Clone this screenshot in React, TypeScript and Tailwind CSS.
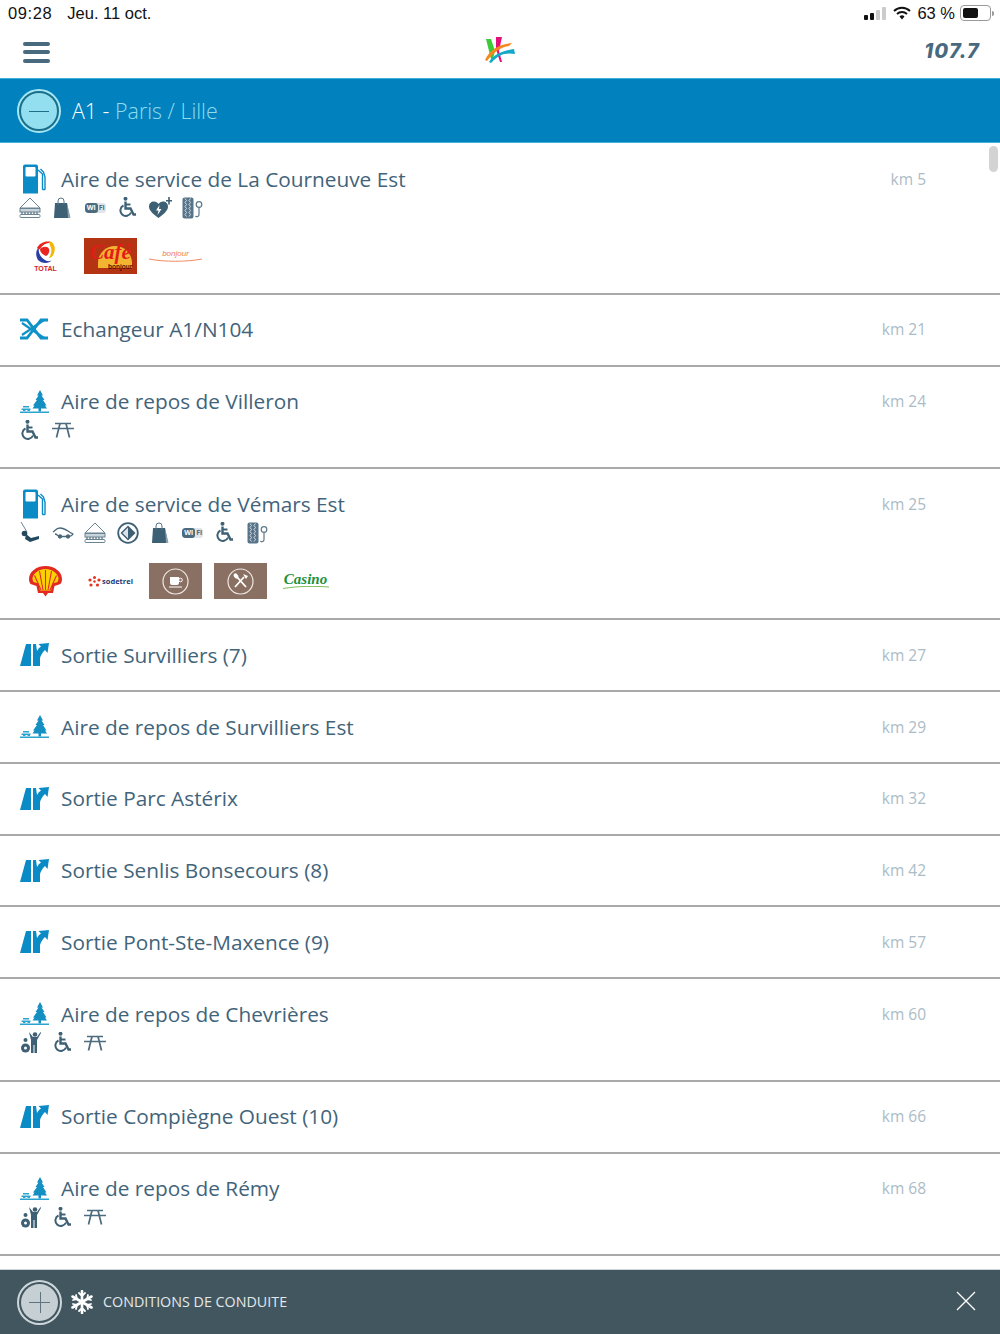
import React from "react";

const BLUE = "#0b8bc6";

function Fuel() {
  return (
    <svg width="24" height="30" viewBox="0 0 24 30">
      <path d="M3 0.500h11a2 2 0 0 1 2 2V29.500H1V2.500a2 2 0 0 1 2-2z" fill={BLUE} />
      <rect x="3.500" y="3" width="10" height="9.500" rx="1" fill="#fff" />
      <path d="M16 6l4.500 4v15a1.500 1.500 0 0 0 2.500 0V13l-1.500-5-3-3" fill="none" stroke={BLUE} strokeWidth="1.400" />
    </svg>
  );
}
function Interchange() {
  return (
    <svg width="30" height="22" viewBox="0 0 30 22">
      <g fill="none" stroke="#0f92c8" strokeWidth="2.800">
        <path d="M1 2h7l14 18h7" />
        <path d="M1 20h7L22 2h7" />
        <path d="M3 5l22 15M3 17 25 2" strokeWidth="2.200" />
      </g>
    </svg>
  );
}
function Rest() {
  return (
    <svg width="29" height="23" viewBox="0 0 29 23">
      <path d="M20 0l3 5.500h-1.500L24.500 10H23l3.500 5.500h-1.500l2 3h-6v3h-2.500v-3h-6l2-3h-1.500L17 10h-1.500l3-4.500H17z" fill="#138fc2" />
      <path d="M0 23h29v-1.500H0zM1.500 18.500h9v1.500h-9zM3 20h2.500v2H3zM7.500 20H10v2H7.500zM3 16h6v1.500H3z" fill="#2aa3cf" />
    </svg>
  );
}
function ExitIcon() {
  return (
    <svg width="29" height="23" viewBox="0 0 29 23">
      <path d="M6 1h5v22H0z" fill={BLUE} />
      <path d="M13 1h3l1 7c1-2 2-3 4-4.500L18.500 1 29 0l-1.500 10-2.500-3c-2 2-4 4.500-5 8v8h-7z" fill={BLUE} />
    </svg>
  );
}
function Sandwich() {
  return (
    <svg width="22" height="21" viewBox="0 0 22 21" fill="none" stroke="#6b8494" strokeWidth="1">
      <path d="M1 11 11 1l10 10z" />
      <rect x="1" y="11.500" width="20" height="3.500" fill="#c9d3da" />
      <path d="M2 16h18" strokeDasharray="2 1" strokeWidth="1.500" />
      <rect x="1" y="17.500" width="20" height="3" rx="1" />
    </svg>
  );
}
function Bag() {
  return (
    <svg width="17" height="21" viewBox="0 0 17 21">
      <path d="M1 6h12l3 15H0z" fill="#3e6075" />
      <path d="M13 6l3.500 15H14z" fill="#8aa0ae" />
      <path d="M4 8V4a3 3 0 0 1 6 0v4" fill="none" stroke="#557386" strokeWidth="1" />
    </svg>
  );
}
function Wifi() {
  return (
    <div className="w-[21px] h-[10px] rounded-[3px] bg-[#dfe5e9] flex overflow-hidden">
      <span className="w-[13px] h-full bg-[#4d6b7e] rounded-[3px] text-white text-[7px] leading-[10px] font-bold text-center">Wi</span>
      <span className="flex-1 text-[#4d6b7e] text-[7px] leading-[10px] font-bold text-center">Fi</span>
    </div>
  );
}
function Wheelchair() {
  return (
    <svg width="18" height="21" viewBox="0 0 18 21" fill="none" stroke="#3e6075" strokeWidth="2">
      <circle cx="6.500" cy="1.800" r="2" fill="#3e6075" stroke="none" />
      <path d="M6.500 4.500v7h5l3 6h2.500" strokeWidth="2.400" />
      <path d="M6.500 7.500h5" />
      <path d="M4.500 8.500a5.500 5.500 0 1 0 7.500 7" />
    </svg>
  );
}
function Heart() {
  return (
    <svg width="23" height="22" viewBox="0 0 23 22">
      <path d="M9.500 21C4 17 0 13.500 0 9.500 0 6.500 2.200 4.500 5 4.500c2 0 3.500 1 4.500 2.500 1-1.500 2.500-2.500 4.500-2.500 2.800 0 5 2 5 5 0 4-4 7.500-9.500 11.500z" fill="#3e6075" />
      <path d="M10.500 8 7 13.500h2.500L8.500 18l4-6H10z" fill="#fff" />
      <path d="M17 3h2.200V0h1.600v3H23v1.600h-2.200v3h-1.600v-3H17z" fill="#3e6075" />
    </svg>
  );
}
function Tire() {
  return (
    <svg width="21" height="22" viewBox="0 0 21 22" fill="none">
      <rect x="0.500" y="0.500" width="11" height="21" rx="2" fill="#577488" />
      <path d="M3 1.500l1.500 2-1.500 2 1.500 2-1.500 2 1.500 2-1.500 2 1.500 2-1.500 2 1.500 2M8.500 1.500l-1.500 2 1.500 2-1.500 2 1.500 2-1.500 2 1.500 2-1.500 2 1.500 2-1.500 2" stroke="#d3dce2" strokeWidth="1" />
      <circle cx="17" cy="7.500" r="2.800" stroke="#5d7889" strokeWidth="1.200" />
      <path d="M17 10.500v7a2 2 0 0 1-3.500 1.500" stroke="#5d7889" strokeWidth="1.200" />
    </svg>
  );
}
function Swing() {
  return (
    <svg width="21" height="21" viewBox="0 0 21 21">
      <path d="M1 0l6 10" stroke="#6b8494" strokeWidth="1" />
      <circle cx="4.500" cy="11.500" r="2.800" fill="#24495e" />
      <path d="M6 12l5 4 8-2v3l-9 3-5-3z" fill="#24495e" />
    </svg>
  );
}
function Car() {
  return (
    <svg width="22" height="12" viewBox="0 0 22 12" fill="none" stroke="#486779" strokeWidth="1.300">
      <path d="M1 5c2-1 3-4 7-4 5 0 7 3 13 6-1 2-2 2.500-4 2.500H8C6 9.500 5 7 3 7" />
      <circle cx="8" cy="9.500" r="1.500" fill="#486779" />
      <circle cx="16" cy="9.500" r="1.500" fill="#486779" />
    </svg>
  );
}
function Diamond() {
  return (
    <svg width="22" height="22" viewBox="0 0 22 22">
      <circle cx="11" cy="11" r="9.800" fill="none" stroke="#3e6075" strokeWidth="1.800" />
      <path d="M11 3.500 18.500 11 11 18.500 3.500 11z" fill="#3e6075" />
      <path d="M11 5.500v11L5.500 11z" fill="#dce4e9" />
    </svg>
  );
}
function Family() {
  return (
    <svg width="21" height="21" viewBox="0 0 21 21">
      <circle cx="15" cy="2.500" r="2.300" fill="#3e6075" />
      <path d="M9 0l4 5h4l3.500-5 .5 1-4 7v13h-2.500v-8h-1v8H11V8z" fill="#3e6075" />
      <circle cx="5.500" cy="8" r="2" fill="#3e6075" />
      <circle cx="5.500" cy="16" r="4.500" fill="#3e6075" />
      <circle cx="5.500" cy="16" r="1.500" fill="#fff" />
    </svg>
  );
}
function Picnic() {
  return (
    <svg width="22" height="16" viewBox="0 0 22 16" fill="none" stroke="#4d6b7e" strokeWidth="1.700">
      <path d="M3 1.500h16M0 6.500h22" />
      <path d="M8 1.500 4.500 15.500M14 1.500l3.500 14" />
    </svg>
  );
}

const amenityIcons: Record<string, React.ReactNode> = {
  sandwich: <Sandwich />,
  bag: <Bag />,
  wifi: <Wifi />,
  chair: <Wheelchair />,
  heart: <Heart />,
  tire: <Tire />,
  swing: <Swing />,
  car: <Car />,
  diamond: <Diamond />,
  family: <Family />,
  picnic: <Picnic />,
};

function TotalLogo() {
  return (
    <div className="w-[53px] h-[36px] flex flex-col items-center">
      <svg width="23" height="25" viewBox="0 0 23 25" className="mt-[2px]">
        <path d="M4 20C1 15 2 9 5 8c-1 4 1 9 6 12 3 2 6 1 7 0-3 4-10 4-14 0z" fill="#2a3fa5" />
        <path d="M3 8C6 2 14 0 18 3c-4-1-9 1-12 6-1 1-2 0-3-1z" fill="#e8261f" />
        <path d="M15 1c5 1 7 7 5 12-1 3-3 5-5 5 2-3 3-7 2-10-1-3-2-5-2-7z" fill="#f6b500" />
        <path d="M6 9c3-3 8-3 9 0 1 3-1 6-3 7-2-1-6-3-6-7z" fill="#e8261f" />
      </svg>
      <span className="text-[7px] leading-[7px] font-bold text-[#d8231f] font-['Liberation_Sans',sans-serif]">TOTAL</span>
    </div>
  );
}
function CafeLogo() {
  return (
    <div className="relative w-[53px] h-[36px] bg-[#b33312] overflow-hidden">
      <div className="absolute left-[14px] top-[8px] w-[34px] h-[22px] bg-[#f3b431] rounded-t-[17px]" />
      <span className="absolute left-[6px] top-[0px] text-[21px] leading-[28px] italic font-bold text-[#e31b1b] font-['Liberation_Serif',serif]">Café</span>
      <span className="absolute left-[24px] top-[25px] text-[6.500px] leading-[8px] font-bold text-[#3b1206] font-['Liberation_Sans',sans-serif]">bonjour</span>
    </div>
  );
}
function BonjourLogo() {
  return (
    <div className="relative w-[53px] h-[36px] flex flex-col items-center justify-center">
      <span className="text-[8px] leading-[8px] italic text-[#ee7c50] font-['Liberation_Sans',sans-serif]">bonjour</span>
      <svg width="53" height="4" viewBox="0 0 53 4">
        <path d="M0 1c15 3 38 3 53 0" fill="none" stroke="#f08a62" strokeWidth="1" />
      </svg>
    </div>
  );
}
function ShellLogo() {
  return (
    <div className="w-[53px] h-[36px] flex items-center justify-center">
      <svg width="33" height="31" viewBox="0 0 33 31">
        <path d="M16.500 0C7 0 0 6 0 13c0 2 .5 3.500 1.500 5l6 2 1.500 7h5l2.500 3.500L19 27h5l1.500-7 6-2c1-1.500 1.500-3 1.500-5C33 6 26 0 16.500 0z" fill="#e22a23" />
        <path d="M16.500 3C10 3 4.500 7 3.500 12c0 2 .5 3 1 4l5 1.500 1.500 7h11l1.500-7 5-1.500c.5-1 1-2 1-4C28.500 7 23 3 16.500 3z" fill="#fbd204" />
        <path d="M16.500 24V4M14 24 10.500 5M19 24 22.500 5M12 24 5.500 9.500M21 24 27.500 9.500" stroke="#e22a23" strokeWidth="1.100" />
      </svg>
    </div>
  );
}
function SodetrelLogo() {
  return (
    <div className="w-[53px] h-[36px] flex items-center justify-center gap-[1px]">
      <svg width="13" height="11" viewBox="0 0 13 11">
        <g fill="#e3341f">
          <circle cx="6.500" cy="1.500" r="1.500" />
          <circle cx="2" cy="4" r="1.600" />
          <circle cx="11" cy="4" r="1.600" />
          <circle cx="3" cy="9" r="1.600" />
          <circle cx="9.500" cy="9" r="1.600" />
          <circle cx="6.500" cy="5.500" r="1.200" />
        </g>
      </svg>
      <span className="text-[7.500px] leading-[10px] font-bold text-[#243a7a] font-['Open_Sans',sans-serif]">sodetrel</span>
    </div>
  );
}
function CoffeeLogo() {
  return (
    <div className="w-[53px] h-[36px] bg-[#8a7062] flex items-center justify-center">
      <svg width="27" height="27" viewBox="0 0 27 27" fill="none">
        <circle cx="13.500" cy="13.500" r="12.500" stroke="#efe9e5" strokeWidth="1.200" />
        <path d="M8 9h9v6a2 2 0 0 1-2 2h-5a2 2 0 0 1-2-2z" fill="#fff" />
        <circle cx="18.500" cy="12" r="1.800" stroke="#fff" strokeWidth="1" />
        <path d="M7 19h13" stroke="#fff" strokeWidth="1" />
      </svg>
    </div>
  );
}
function ForkLogo() {
  return (
    <div className="w-[53px] h-[36px] bg-[#8a7062] flex items-center justify-center">
      <svg width="27" height="27" viewBox="0 0 27 27" fill="none">
        <circle cx="13.500" cy="13.500" r="12.500" stroke="#efe9e5" strokeWidth="1.200" />
        <path d="M8 19 17 9M19 19 10 9" stroke="#fff" strokeWidth="1.800" />
        <path d="M16 6l3 5 2-3z" fill="#fff" />
        <ellipse cx="9" cy="8" rx="2" ry="2.800" fill="#fff" transform="rotate(-40 9 8)" />
      </svg>
    </div>
  );
}
function CasinoLogo() {
  return (
    <div className="w-[53px] h-[36px] flex flex-col items-center justify-center">
      <span className="text-[15px] leading-[13px] italic font-bold text-[#1f9138] font-['Liberation_Serif',serif]">Casino</span>
      <svg width="46" height="3" viewBox="0 0 46 3">
        <path d="M0 2.500C15 0 32 0 46 1" fill="none" stroke="#7cbf55" strokeWidth="1" />
      </svg>
    </div>
  );
}

type Entry = {
  type: "fuel" | "swap" | "rest" | "exit";
  title: string;
  km: string;
  amenities?: string[];
  logos?: React.ReactNode[];
};

const entries: Entry[] = [
  {
    type: "fuel",
    title: "Aire de service de La Courneuve Est",
    km: "km 5",
    amenities: ["sandwich", "bag", "wifi", "chair", "heart", "tire"],
    logos: [<TotalLogo />, <CafeLogo />, <BonjourLogo />],
  },
  { type: "swap", title: "Echangeur A1/N104", km: "km 21" },
  { type: "rest", title: "Aire de repos de Villeron", km: "km 24", amenities: ["chair", "picnic"] },
  {
    type: "fuel",
    title: "Aire de service de Vémars Est",
    km: "km 25",
    amenities: ["swing", "car", "sandwich", "diamond", "bag", "wifi", "chair", "tire"],
    logos: [<ShellLogo />, <SodetrelLogo />, <CoffeeLogo />, <ForkLogo />, <CasinoLogo />],
  },
  { type: "exit", title: "Sortie Survilliers (7)", km: "km 27" },
  { type: "rest", title: "Aire de repos de Survilliers Est", km: "km 29" },
  { type: "exit", title: "Sortie Parc Astérix", km: "km 32" },
  { type: "exit", title: "Sortie Senlis Bonsecours (8)", km: "km 42" },
  { type: "exit", title: "Sortie Pont-Ste-Maxence (9)", km: "km 57" },
  { type: "rest", title: "Aire de repos de Chevrières", km: "km 60", amenities: ["family", "chair", "picnic"] },
  { type: "exit", title: "Sortie Compiègne Ouest (10)", km: "km 66" },
  { type: "rest", title: "Aire de repos de Rémy", km: "km 68", amenities: ["family", "chair", "picnic"] },
];

const typeIcon = {
  fuel: <Fuel />,
  swap: <Interchange />,
  rest: <Rest />,
  exit: <ExitIcon />,
};

function Row({ e }: { e: Entry }) {
  const h = e.logos ? "h-[150.9px]" : e.amenities ? "h-[102.7px]" : "h-[71.8px]";
  return (
    <div className={`${h} shrink-0 border-b-2 border-[#a9a9a9] flex flex-col`}>
      <div className="h-[36px] mt-[16.5px] flex items-center pl-[19px] pr-[74px]">
        <div className="w-[30px] h-[30px] flex items-center justify-center shrink-0">{typeIcon[e.type]}</div>
        <span className="ml-[12px] flex-1 text-[20.8px] leading-[30px] text-[#42647a]">{e.title}</span>
        <span className="text-[15.5px] leading-[20px] text-[#abbcc7]">{e.km}</span>
      </div>
      {e.amenities && (
        <div className="flex items-center h-[22px] pl-[14px]">
          {e.amenities.map((a, i) => (
            <div key={i} className="w-[32.5px] flex justify-center items-center shrink-0">
              {amenityIcons[a]}
            </div>
          ))}
        </div>
      )}
      {e.logos && (
        <div className="flex gap-[12px] pl-[19px] mt-[19.5px]">
          {e.logos.map((l, i) => (
            <React.Fragment key={i}>{l}</React.Fragment>
          ))}
        </div>
      )}
    </div>
  );
}

function StatusBar() {
  return (
    <div className="h-[26px] flex items-center justify-between pl-[8px] pr-[6px] text-[16.5px] text-[#111] font-['Liberation_Sans',sans-serif]">
      <div className="flex gap-[15px]">
        <span className="tracking-[0.6px]">09:28</span>
        <span>Jeu. 11 oct.</span>
      </div>
      <div className="flex items-center">
        <svg width="22" height="13" viewBox="0 0 22 13">
          <rect x="0" y="8" width="4" height="5" rx="1" fill="#111" />
          <rect x="6" y="6" width="4" height="7" rx="1" fill="#111" />
          <rect x="12" y="3" width="4" height="10" rx="1" fill="#ccc" />
          <rect x="18" y="0" width="4" height="13" rx="1" fill="#ccc" />
        </svg>
        <svg width="18" height="14" viewBox="0 0 18 14" className="ml-[7px]" fill="none" stroke="#111" strokeWidth="2">
          <path d="M1 5a11.500 11.500 0 0 1 16 0M4 8a7.500 7.500 0 0 1 10 0" />
          <path d="M6.500 10.500 9 13.500l2.500-3a3.500 3.500 0 0 0-5 0z" fill="#111" stroke="none" />
        </svg>
        <span className="ml-[6px]">63 %</span>
        <div className="ml-[5px] w-[31px] h-[16px] rounded-[4px] border border-[#999] p-[2px]">
          <div className="w-[60%] h-full rounded-[2px] bg-[#111]" />
        </div>
        <div className="w-[2px] h-[5px] bg-[#999] rounded-r-[2px] ml-[1px]" />
      </div>
    </div>
  );
}

export default function App() {
  return (
    <div className="relative w-[1000px] h-[1334px] overflow-hidden bg-white flex flex-col font-['Open_Sans',sans-serif]">
      <StatusBar />
      <div className="h-[52px] shrink-0 flex items-center pl-[23px] pr-[20px]">
        <div className="flex-1">
          <div className="flex flex-col gap-[4.500px] w-[27px]">
            <div className="h-[4px] rounded-full bg-[#49697e]" />
            <div className="h-[4px] rounded-full bg-[#49697e]" />
            <div className="h-[4px] rounded-full bg-[#49697e]" />
          </div>
        </div>
        <svg width="32" height="28" viewBox="0 0 32 28" className="-mt-[4px] -ml-[6px]">
          <path d="M3 3h5l4 12-3 12z" fill="#3cc93a" />
          <path d="M13 1h6l-3 14 3 11-2 0-4-13z" fill="#e4107a" />
          <path d="M2 24C7 13 17 8 29 7l-3 3c-8 1-15 6-22 15z" fill="#f7861b" />
          <path d="M6 26c5-8 13-11 25-13l1 5c-10-2-17 1-24 9z" fill="#12a8c9" />
        </svg>
        <div className="flex-1 flex justify-end">
          <span className="text-[20px] leading-[24px] italic font-extrabold text-[#49697e] tracking-[1.2px] -mt-[3px] font-['Inter',sans-serif]">107.7</span>
        </div>
      </div>
      <div className="h-[65px] shrink-0 bg-[#0181bd] border-y border-[#3fb2da] flex items-center pl-[17px] pt-[1px]">
        <div className="w-[44px] h-[44px] rounded-full border-[2px] border-[#a4e6f5] bg-[#1a6f88] p-[2px]">
          <div className="w-full h-full rounded-full bg-[#93deef] flex items-center justify-center">
            <div className="w-[20px] h-[1px] bg-[#1f6e88]" />
          </div>
        </div>
        <span className="ml-[11px] text-[21.4px] font-light text-white">
          A1 - <span className="text-[#8fdcef]">Paris / Lille</span>
        </span>
      </div>
      <div className="flex-1 min-h-0 flex flex-col pt-[1px]">
        {entries.map((e, i) => (
          <Row key={i} e={e} />
        ))}
      </div>
      <div className="h-[65px] shrink-0 bg-[#41565f] border-t border-[#cfd5d8] flex items-center pl-[17px] pr-[24px]">
        <div className="w-[45px] h-[45px] rounded-full border-[2px] border-[#cfd6da] bg-[#41565f] p-[2px]">
          <div className="relative w-full h-full rounded-full bg-[#c6cfd4]">
            <div className="absolute left-[8px] right-[8px] top-1/2 h-[1px] bg-[#5f747e]" />
            <div className="absolute top-[8px] bottom-[8px] left-1/2 w-[1px] bg-[#5f747e]" />
          </div>
        </div>
        <svg width="24" height="24" viewBox="0 0 24 24" className="ml-[8px]" stroke="#fff" strokeWidth="2.600" strokeLinecap="round">
          <path d="M12 1v22M2.500 6.500l19 11M21.500 6.500l-19 11" />
          <path d="M9 3l3 3 3-3M9 21l3-3 3 3M3 10l4-1-1-4M21 10l-4-1 1-4M3 14l4 1-1 4M21 14l-4 1 1 4" fill="none" strokeWidth="1.800" />
        </svg>
        <span className="ml-[9px] flex-1 text-[14.3px] leading-[20px] -mt-[1px] text-[#e3e8ea]">CONDITIONS DE CONDUITE</span>
        <svg width="20" height="20" viewBox="0 0 20 20" stroke="#fff" strokeWidth="1.300" className="-mt-[2px]">
          <path d="M1 1l18 18M19 1 1 19" />
        </svg>
      </div>
      <div className="absolute left-[989px] top-[146px] w-[9px] h-[26px] rounded-full bg-[#d3d3d3]" />
    </div>
  );
}
